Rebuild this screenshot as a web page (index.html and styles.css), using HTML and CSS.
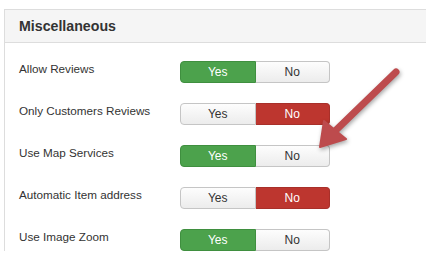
FILE: index.html
```html
<!DOCTYPE html>
<html lang="en">
  <head>
    <meta charset="utf-8">
    <title>Miscellaneous</title>
    <link rel="stylesheet" href="styles.css">
  </head>
  <body>
    <div class="panel">
      <div class="panel-head"><h3>Miscellaneous</h3></div>
      <div class="panel-body">
        <div class="row">
          <div class="label">Allow Reviews</div>
          <div class="toggle"><span class="btn yes on">Yes</span><span class="btn no">No</span></div>
        </div>
        <div class="row">
          <div class="label">Only Customers Reviews</div>
          <div class="toggle"><span class="btn yes">Yes</span><span class="btn no on">No</span></div>
        </div>
        <div class="row">
          <div class="label">Use Map Services</div>
          <div class="toggle"><span class="btn yes on">Yes</span><span class="btn no">No</span></div>
        </div>
        <div class="row">
          <div class="label">Automatic Item address</div>
          <div class="toggle"><span class="btn yes">Yes</span><span class="btn no on">No</span></div>
        </div>
        <div class="row">
          <div class="label">Use Image Zoom</div>
          <div class="toggle"><span class="btn yes on">Yes</span><span class="btn no">No</span></div>
        </div>
      </div>
    </div>

    <!-- annotation arrow drawn over the form -->
    <svg class="arrow" width="426" height="263" viewBox="0 0 426 263">
      <line x1="396" y1="72" x2="334" y2="132" stroke="#bd4b4d" stroke-width="7" stroke-linecap="round"/>
      <polygon points="320,147 324,121 346,139" fill="#bd4b4d" stroke="#bd4b4d" stroke-width="2" stroke-linejoin="round"/>
    </svg>
  </body>
</html>
```

FILE: styles.css
```css
body { margin: 0; font-family: "Liberation Sans", Arial, sans-serif; color: #333; background: #fff; overflow: hidden; }
.panel { margin: 9px 0 0 4px; width: 460px; border-top: 1px solid #ddd; border-left: 1px solid #ddd; }
.panel-head { height: 32px; background: #f5f5f5; border-bottom: 1px solid #ddd; display: flex; align-items: center; padding-left: 14px; }
.panel-head h3 { margin: 0; font-size: 14.2px; font-weight: bold; color: #333; }
.panel-body { padding: 18px 0 0 14px; display: flex; flex-direction: column; gap: 20px; }
.row { display: flex; align-items: flex-start; height: 22px; }
.label { width: 161px; font-size: 11.7px; padding-top: 1px; line-height: 14px; }
.toggle { display: flex; width: 150px; height: 22px; }
.btn { flex: 1; display: flex; align-items: center; justify-content: center; font-size: 12px; border: 1px solid #c5c5c5; background: linear-gradient(#fdfdfd, #ececec); color: #333; }
.yes { border-radius: 4px 0 0 4px; }
.no { border-radius: 0 4px 4px 0; border-left: none; }
.yes.on { background: #4ca24c; border-color: #3f8f3f; color: #fff; }
.no.on { background: #bd362f; border-color: #a8302a; color: #fff; }
.arrow { position: absolute; left: 0; top: 0; filter: drop-shadow(1px 2px 2px rgba(0,0,0,0.35)); }
```
